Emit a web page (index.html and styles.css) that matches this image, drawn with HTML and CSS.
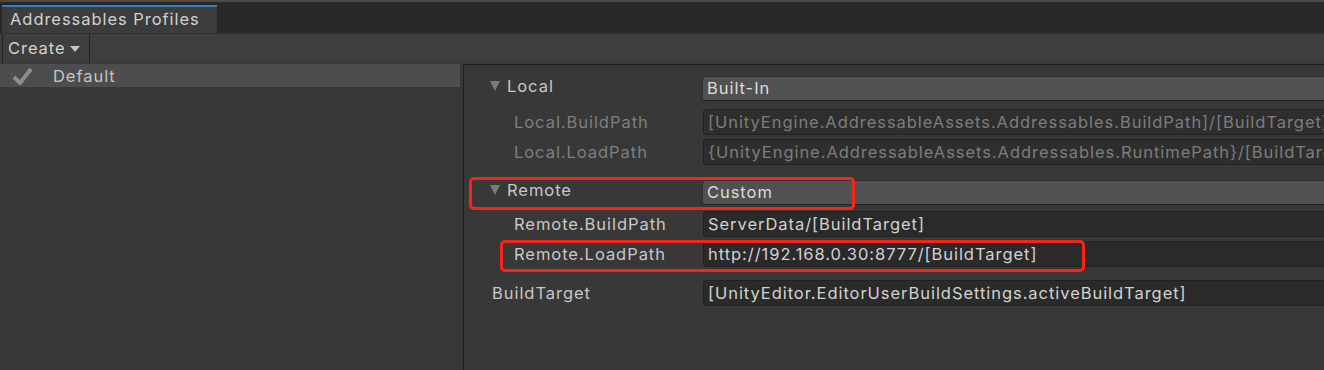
FILE: index.html
```html
<!DOCTYPE html>
<html lang="en">
<head>
    <meta charset="UTF-8">
    <meta name="viewport" content="width=device-width, initial-scale=1.0">
    <title>Addressables Profiles</title>
    <link rel="stylesheet" href="styles.css">
</head>
<body>
    <div class="window">
        <!-- tab strip -->
        <div class="tab-bar">
            <div class="tab">Addressables Profiles</div>
        </div>

        <!-- toolbar -->
        <div class="toolbar">
            <div class="tool-button">Create <span class="caret"></span></div>
        </div>

        <div class="main">
            <!-- profile list -->
            <div class="profile-list">
                <div class="profile-row">
                    <svg class="check" width="22" height="20" viewBox="0 0 22 20">
                        <path d="M2 11 L8 17 L19 3" fill="none" stroke="#8c8c8c" stroke-width="4" stroke-linejoin="round"/>
                    </svg>
                    <span>Default</span>
                </div>
            </div>

            <!-- profile variables -->
            <div class="inspector">
                <div class="row head first">
                    <div class="label"><span class="fold"></span>Local</div>
                    <div class="dropdown">Built-In</div>
                </div>
                <div class="row sub gap8">
                    <div class="label muted">Local.BuildPath</div>
                    <div class="field muted">[UnityEngine.AddressableAssets.Addressables.BuildPath]/[BuildTarget]</div>
                </div>
                <div class="row sub gap5">
                    <div class="label muted">Local.LoadPath</div>
                    <div class="field muted">{UnityEngine.AddressableAssets.Addressables.RuntimePath}/[BuildTarget]</div>
                </div>
                <div class="row head gap16">
                    <div class="label"><span class="fold"></span>Remote</div>
                    <div class="dropdown">Custom</div>
                </div>
                <div class="row sub gap7">
                    <div class="label">Remote.BuildPath</div>
                    <div class="field">ServerData/[BuildTarget]</div>
                </div>
                <div class="row sub gap5">
                    <div class="label">Remote.LoadPath</div>
                    <div class="field">http://192.168.0.30:8777/[BuildTarget]</div>
                </div>
                <div class="row plain gap11">
                    <div class="label">BuildTarget</div>
                    <div class="field">[UnityEditor.EditorUserBuildSettings.activeBuildTarget]</div>
                </div>

                <!-- red annotation boxes -->
                <div class="mark mark-remote"></div>
                <div class="mark mark-load"></div>
            </div>
        </div>
    </div>
</body>
</html>
```

FILE: styles.css
```css
body {
    margin: 0;
    padding: 0;
    background-color: #383838;
    color: #c4c4c4;
    font-family: Inter, "Noto Sans", sans-serif;
    font-size: 16.5px;
    letter-spacing: 0.95px;
    overflow: hidden;
}
.window {
    width: 1324px;
    height: 370px;
    display: flex;
    flex-direction: column;
}
.tab-bar {
    background-color: #282828;
    border-top: 2px solid #4a4a4a;
    display: flex;
    align-items: flex-end;
    box-sizing: border-box;
    height: 33px;
}
.tab {
    margin-left: 2px;
    width: 215px;
    height: 28px;
    box-sizing: border-box;
    border-top: 2px solid #3a79bb;
    background-color: #3c3c3c;
    padding-left: 8px;
    line-height: 25px;
    color: #d2d2d2;
}
.toolbar {
    height: 30px;
    background-color: #3e3e3e;
    border-top: 1px solid #2f2f2f;
    box-sizing: border-box;
    display: flex;
}
.tool-button {
    margin-left: 2px;
    padding: 0 6px 0 5px;
    width: 88px;
    box-sizing: border-box;
    border-left: 1px solid #232323;
    border-right: 1px solid #232323;
    line-height: 29px;
    color: #d2d2d2;
    display: flex;
    align-items: center;
    gap: 4px;
}
.caret {
    width: 0;
    height: 0;
    border-left: 5px solid transparent;
    border-right: 5px solid transparent;
    border-top: 6px solid #c4c4c4;
}
.main {
    flex: 1;
    display: flex;
    min-height: 0;
}
.profile-list {
    width: 460px;
    padding-top: 1px;
}
.profile-row {
    height: 23px;
    background-color: #4d4d4d;
    display: flex;
    align-items: center;
    color: #c4c4c4;
}
.profile-row .check {
    margin-left: 12px;
    margin-right: 19px;
}
.inspector {
    position: relative;
    flex: 1;
    margin-left: 3px;
    margin-top: 1px;
    border-left: 1px solid #1e1e1e;
    border-top: 1px solid #1e1e1e;
    padding-top: 11px;
    overflow: hidden;
}
.row {
    display: flex;
    align-items: center;
    height: 25px;
    white-space: nowrap;
}
.gap5 { margin-top: 5px; }
.gap7 { margin-top: 6px; }
.gap8 { margin-top: 8px; }
.gap11 { margin-top: 14px; }
.gap16 { margin-top: 16px; }
.label {
    width: 238px;
    flex-shrink: 0;
    box-sizing: border-box;
    display: flex;
    align-items: center;
    color: #c8c8c8;
}
.row.head .label {
    padding-left: 26px;
    margin-top: -5px;
}
.row.sub .label {
    padding-left: 50px;
}
.row.plain .label {
    padding-left: 28px;
}
.fold {
    width: 0;
    height: 0;
    border-left: 5px solid transparent;
    border-right: 5px solid transparent;
    border-top: 10px solid #7a7a7a;
    margin-right: 7px;
}
.label.muted {
    color: #7f7f7f;
}
.dropdown {
    flex: 1;
    height: 25px;
    box-sizing: border-box;
    background-color: #515151;
    border: 1px solid #303030;
    border-bottom-color: #242424;
    border-radius: 3px 0 0 3px;
    padding-left: 4px;
    line-height: 23px;
    color: #dcdcdc;
    margin-right: -4px;
}
.field {
    flex: 1;
    height: 26px;
    box-sizing: border-box;
    margin-left: 1px;
    background-color: #2a2a2a;
    border: 1px solid #212121;
    border-radius: 3px 0 0 3px;
    padding-left: 4px;
    line-height: 24px;
    color: #d2d2d2;
    overflow: hidden;
    margin-right: -4px;
}
.field.muted {
    color: #7d7d7d;
    background-color: #2e2e2e;
}
.mark {
    position: absolute;
    border: 3px solid #f52518;
    border-radius: 5px;
    box-sizing: border-box;
}
.mark-remote {
    left: 5px;
    top: 112px;
    width: 386px;
    height: 33px;
}
.mark-load {
    left: 36px;
    top: 175px;
    width: 585px;
    height: 32px;
}
```
